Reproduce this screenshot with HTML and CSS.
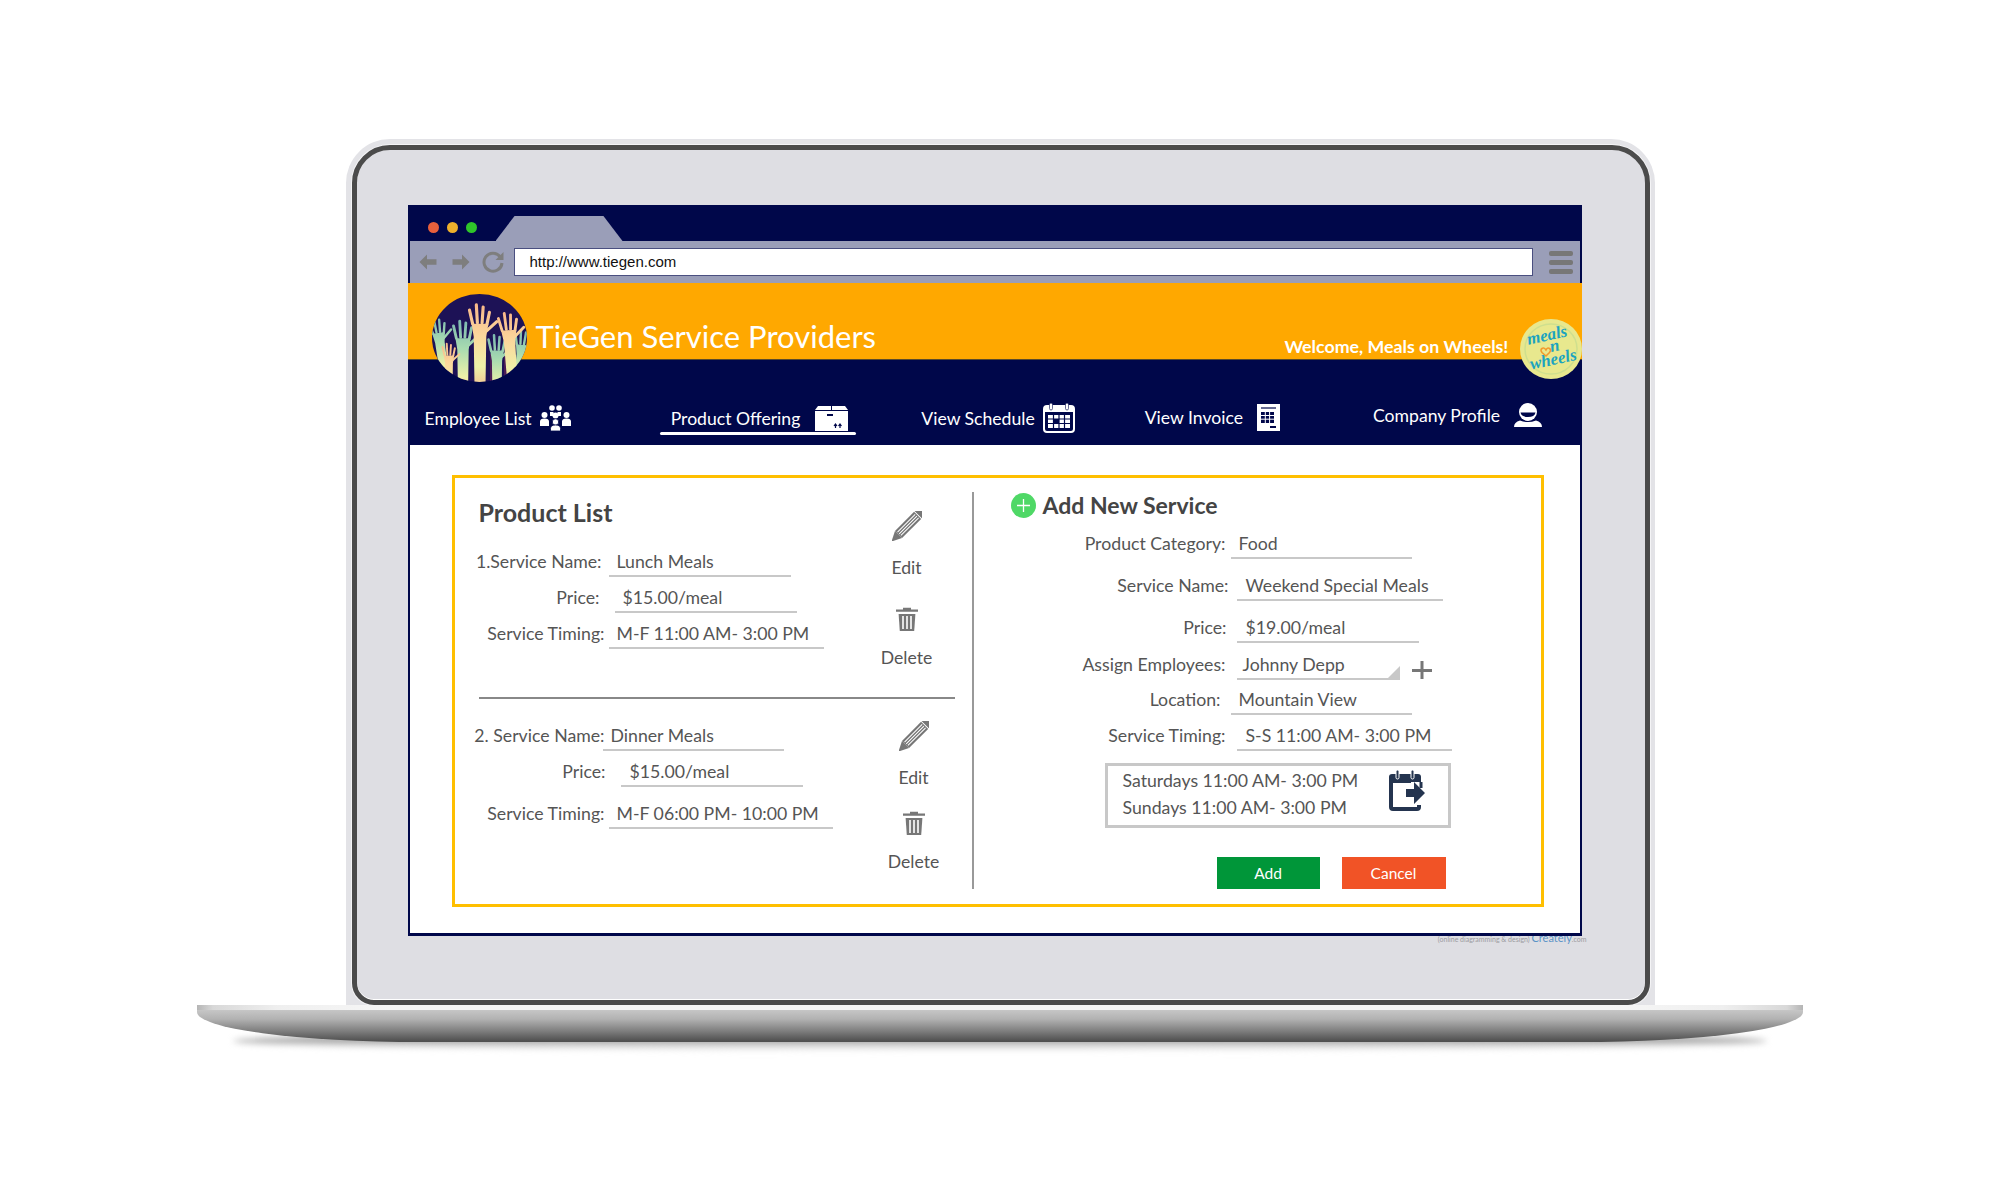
FILE: index.html
```html
<!DOCTYPE html>
<html lang="en">
<head>
    <meta charset="UTF-8">
    <title>TieGen Service Providers</title>
    <link rel="stylesheet" href="styles.css">
</head>
<body>
    <svg class="defs" width="0" height="0">
        <defs>
            <symbol id="pencil" viewBox="0 0 30 30">
                <g transform="rotate(45 15 15)">
                    <path d="M10 -3 a5 4 0 0 1 10 0 v2 h-10z" fill="#777"/>
                    <rect x="10" y="0" width="10" height="27" fill="#777"/>
                    <path d="M12.6 1v25M15 1v25M17.4 1v25" stroke="#fff" stroke-width="1"/>
                    <path d="M10 27h10l-5 10z" fill="#777"/>
                </g>
            </symbol>
            <symbol id="trash" viewBox="0 0 22 24">
                <path d="M7 2.5V0.8h8v1.7h7v2.2H0V2.5z" fill="#777"/>
                <path d="M2.6 7h16.8l-1.2 17H3.8z" fill="#777"/>
                <path d="M7 9v13M11 9v13M15 9v13" stroke="#fff" stroke-width="1.6"/>
            </symbol>
            <linearGradient id="armPeach" gradientUnits="userSpaceOnUse" x1="0" y1="-22" x2="0" y2="62">
                <stop offset="0" stop-color="#f8b98a"/>
                <stop offset=".35" stop-color="#fbd79c"/>
                <stop offset=".7" stop-color="#eef1a8"/>
                <stop offset="1" stop-color="#f4b88c"/>
            </linearGradient>
            <linearGradient id="armMint" gradientUnits="userSpaceOnUse" x1="0" y1="-22" x2="0" y2="62">
                <stop offset="0" stop-color="#7db9b0"/>
                <stop offset=".35" stop-color="#a9dcb0"/>
                <stop offset=".7" stop-color="#eef1a8"/>
                <stop offset="1" stop-color="#f6c592"/>
            </linearGradient>
            <g id="handPeach" fill="url(#armPeach)" stroke="url(#armPeach)" stroke-linecap="round">
                <path d="M-8 -4 L8 -4 L6 8 L5 70 L-5 70 L-6 8z" stroke="none"/>
                <path d="M-7 -4 L-10 -17M-2.5 -5 L-3.5 -22M2 -5 L3 -20M6.5 -3 L9 -15M6 3 L16 -6" stroke-width="3" fill="none"/>
            </g>
            <g id="handMint" fill="url(#armMint)" stroke="url(#armMint)" stroke-linecap="round">
                <path d="M-8 -4 L8 -4 L6 8 L5 70 L-5 70 L-6 8z" stroke="none"/>
                <path d="M-7 -4 L-10 -17M-2.5 -5 L-3.5 -22M2 -5 L3 -20M6.5 -3 L9 -15M6 3 L16 -6" stroke-width="3" fill="none"/>
            </g>
            <clipPath id="logoClip"><ellipse cx="47.5" cy="44" rx="47.5" ry="44"/></clipPath>
        </defs>
    </svg>

    <div class="laptop">
        <div class="lid">
            <div class="bezel">
                <div class="screen">
                    <div class="tabstrip">
                        <span class="dot dot-red"></span>
                        <span class="dot dot-yellow"></span>
                        <span class="dot dot-green"></span>
                        <span class="tab"></span>
                    </div>
                    <div class="toolbar">
                        <svg class="tool-arrow" width="18" height="16" viewBox="0 0 18 16"><path d="M8 0.5L0.5 8 8 15.5V10.8H17.5V5.2H8z" fill="#7e7e7e"/></svg>
                        <svg class="tool-arrow fwd" width="18" height="16" viewBox="0 0 18 16"><path d="M10 0.5L17.5 8 10 15.5V10.8H0.5V5.2H10z" fill="#7e7e7e"/></svg>
                        <svg class="tool-reload" width="22" height="22" viewBox="0 0 22 22"><path d="M18 5.5A9 9 0 1 0 20 12" fill="none" stroke="#7e7e7e" stroke-width="3"/><path d="M21.5 1v8h-8z" fill="#7e7e7e"/></svg>
                        <div class="url">http://www.tiegen.com</div>
                        <div class="burger"><span></span><span></span><span></span></div>
                    </div>
                    <div class="site-head">
                        <svg class="logo" width="95" height="88" viewBox="0 0 95 88">
                            <g clip-path="url(#logoClip)">
                                <rect width="95" height="88" fill="#1d1256"/>
                                <path d="M16 70h5v18h-5zM28 50h6v38h-6zM58 60h6v28h-6zM72 60h6v28h-6z" fill="#4a1c55"/>
                                <use href="#handMint" transform="translate(7 42) rotate(-8) scale(.8)"/>
                                <use href="#handMint" transform="translate(90 54) rotate(6) scale(.8)"/>
                                <use href="#handMint" transform="translate(31 48) scale(.95)"/>
                                <use href="#handMint" transform="translate(65 60) scale(.85)"/>
                                <use href="#handPeach" transform="translate(17 64) scale(.65)"/>
                                <use href="#handPeach" transform="translate(48 34) scale(1.05)"/>
                                <use href="#handPeach" transform="translate(77 40) rotate(-4) scale(.95)"/>
                            </g>
                        </svg>
                        <div class="orange-bar">
                            <h1 class="site-title">TieGen Service Providers</h1>
                            <div class="welcome">Welcome, Meals on Wheels!</div>
                        </div>
                        <nav class="nav">
                            <a class="nav-item item-employee">Employee List
                                <svg width="31" height="26" viewBox="0 0 31 26" fill="#fff">
                                    <circle cx="12" cy="3" r="2.8"/><circle cx="19" cy="3" r="2.8"/>
                                    <circle cx="4.5" cy="10" r="3"/><circle cx="26.5" cy="10" r="3"/><circle cx="15.5" cy="10.5" r="3"/>
                                    <path d="M10 7h3.5v4h-3.500zM17.500 7H21v4h-3.500z"/>
                                    <path d="M0 21v-4.500q0-3 4.500-3t4.500 3V21zM22 21v-4.500q0-3 4.500-3t4.500 3V21z"/>
                                    <circle cx="15.500" cy="17" r="3.200" stroke="#00074a" stroke-width=".8"/>
                                    <path d="M10.500 26v-2.500q0-3.500 5-3.500t5 3.500V26z" stroke="#00074a" stroke-width=".8"/>
                                </svg>
                            </a>
                            <a class="nav-item item-product active">Product Offering
                                <svg width="33" height="25" viewBox="0 0 33 25">
                                    <path d="M3 0h27l3 4v21H0V4z" fill="#fff"/>
                                    <path d="M0 4.500h33M16.500 0v4" stroke="#00074a" stroke-width="1"/>
                                    <path d="M12 9h6" stroke="#00074a" stroke-width="2"/>
                                    <path d="M20.500 18v4M25 18v4M19 20l1.500-2 1.500 2M23.500 20l1.500-2 1.500 2" stroke="#00074a" stroke-width="1.200" fill="none"/>
                                </svg>
                            </a>
                            <a class="nav-item item-schedule">View Schedule
                                <svg width="32" height="30" viewBox="0 0 32 30">
                                    <rect x="1" y="3" width="30" height="26" rx="3" fill="#00074a" stroke="#fff" stroke-width="2"/>
                                    <path d="M1 4h30v5H1z" fill="#fff"/>
                                    <rect x="6.500" y="0" width="3" height="7" rx="1.500" fill="#fff" stroke="#00074a" stroke-width=".6"/>
                                    <rect x="22.500" y="0" width="3" height="7" rx="1.500" fill="#fff" stroke="#00074a" stroke-width=".6"/>
                                    <path d="M5 12h22v13H5z" fill="#fff"/>
                                    <path d="M5 16h22M5 20.500h22M10.500 12v13M16 12v13M21.500 12v13" stroke="#00074a" stroke-width="1.200"/>
                                    <rect x="10.500" y="16" width="5.500" height="4.500" fill="#00074a"/>
                                </svg>
                            </a>
                            <a class="nav-item item-invoice">View Invoice
                                <svg width="23" height="27" viewBox="0 0 23 27">
                                    <rect width="23" height="27" fill="#fff"/>
                                    <path d="M4 4h15" stroke="#00074a" stroke-width="1.200"/>
                                    <path d="M4 8h13v11H4z" fill="#00074a"/>
                                    <path d="M4 11.500h13M4 15.200h13M8.300 8v11M12.600 8v11" stroke="#fff" stroke-width="1"/>
                                    <path d="M13 23h6" stroke="#00074a" stroke-width="2"/>
                                </svg>
                            </a>
                            <a class="nav-item item-profile">Company Profile
                                <svg width="28" height="24" viewBox="0 0 28 24" fill="#fff">
                                    <circle cx="14" cy="9" r="9"/>
                                    <path d="M6.500 9.500h15q-1 4.500-7.500 4.500t-7.500-4.500z" fill="#00074a"/>
                                    <path d="M0 24q0-5 6-6.500 8 3 16 0 6 1.500 6 6.500z"/>
                                </svg>
                            </a>
                        </nav>
                        <svg class="meals" width="62" height="60" viewBox="0 0 62 60">
                            <ellipse cx="31" cy="30" rx="31" ry="30" fill="#e8e88e"/>
                            <ellipse cx="31" cy="30" rx="26" ry="25" fill="none" stroke="#cfdf8e" stroke-width="1.500"/>
                            <g class="meals-text" transform="rotate(-12 31 30)">
                                <text x="30" y="21" text-anchor="middle">meals</text>
                                <text x="35" y="33" text-anchor="middle">n</text>
                                <text x="31" y="46" text-anchor="middle">wheels</text>
                            </g>
                            <path d="M26 31q-2-3-4-1.500t0 4l4 3.500 3.500-3.500q2-2.500 0-4t-3.500 1.500z" fill="none" stroke="#f29a2e" stroke-width="1.600"/>
                        </svg>
                    </div>
                    <div class="page">
                        <div class="frame">
                            <section class="products">
                                <div class="product lunch">
                                    <div class="fields">
                                        <h2 class="list-title">Product List</h2>
                                        <div class="row r-lunch-name"><span class="label">1.Service Name:</span><span class="value">Lunch Meals</span></div>
                                        <div class="row r-lunch-price"><span class="label">Price:</span><span class="value">$15.00/meal</span></div>
                                        <div class="row r-lunch-time"><span class="label">Service Timing:</span><span class="value">M-F 11:00 AM- 3:00 PM</span></div>
                                    </div>
                                    <div class="actions">
                                        <svg class="act-pencil" width="30" height="30"><use href="#pencil"/></svg>
                                        <div class="act-edit">Edit</div>
                                        <svg class="act-trash" width="22" height="24"><use href="#trash"/></svg>
                                        <div class="act-delete">Delete</div>
                                    </div>
                                </div>
                                <hr class="split">
                                <div class="product dinner">
                                    <div class="fields">
                                        <div class="row r-dinner-name"><span class="label">2. Service Name:</span><span class="value">Dinner Meals</span></div>
                                        <div class="row r-dinner-price"><span class="label">Price:</span><span class="value">$15.00/meal</span></div>
                                        <div class="row r-dinner-time"><span class="label">Service Timing:</span><span class="value">M-F 06:00 PM- 10:00 PM</span></div>
                                    </div>
                                    <div class="actions">
                                        <svg class="act-pencil" width="30" height="30"><use href="#pencil"/></svg>
                                        <div class="act-edit">Edit</div>
                                        <svg class="act-trash" width="22" height="24"><use href="#trash"/></svg>
                                        <div class="act-delete">Delete</div>
                                    </div>
                                </div>
                            </section>
                            <section class="add-service">
                                <h2 class="add-title">
                                    <svg width="25" height="25" viewBox="0 0 25 25"><circle cx="12.500" cy="12.500" r="12.500" fill="#4fd866"/><path d="M12.500 6v13M6 12.500h13" stroke="#fff" stroke-width="1.300"/></svg>
                                    Add New Service
                                </h2>
                                <div class="row r-cat"><span class="label">Product Category:</span><span class="value">Food</span></div>
                                <div class="row r-name"><span class="label">Service Name:</span><span class="value">Weekend Special Meals</span></div>
                                <div class="row r-price"><span class="label">Price:</span><span class="value">$19.00/meal</span></div>
                                <div class="row r-assign">
                                    <span class="label">Assign Employees:</span><span class="value select">Johnny Depp</span>
                                    <svg class="add-emp" width="20" height="18" viewBox="0 0 20 18"><path d="M10 0v18M0 9.500h20" stroke="#777" stroke-width="3"/></svg>
                                </div>
                                <div class="row r-loc"><span class="label">Location:</span><span class="value">Mountain View</span></div>
                                <div class="row r-time"><span class="label">Service Timing:</span><span class="value">S-S 11:00 AM- 3:00 PM</span></div>
                                <div class="times">
                                    <div class="times-text">Saturdays 11:00 AM- 3:00 PM<br>Sundays 11:00 AM- 3:00 PM</div>
                                    <svg class="times-icon" width="38" height="41" viewBox="0 0 38 41">
                                        <path d="M24 11H4v26q0 2 2 2h24q2 0 2-2v-2" fill="none" stroke="#24344f" stroke-width="4"/>
                                        <path d="M2 12V7q0-3 3-3h26q3 0 3 3v5z" fill="#24344f"/>
                                        <path d="M34 12v6" stroke="#24344f" stroke-width="3"/>
                                        <rect x="9" y="0" width="3" height="9" rx="1.500" fill="#24344f" stroke="#fff"/>
                                        <rect x="24" y="0" width="3" height="9" rx="1.500" fill="#24344f" stroke="#fff"/>
                                        <path d="M19 19h8v-7l11 11-11 11v-7h-8z" fill="#24344f"/>
                                    </svg>
                                </div>
                                <div class="buttons">
                                    <button class="btn btn-add">Add</button>
                                    <button class="btn btn-cancel">Cancel</button>
                                </div>
                            </section>
                        </div>
                    </div>
                </div>
                <div class="watermark">(online diagramming &amp; design) <span class="wm-brand">Creately</span>.com</div>
            </div>
        </div>
        <div class="base"></div>
    </div>
</body>
</html>
```

FILE: styles.css
```css
* { box-sizing: border-box; }
body { margin: 0; background: #fff; font-family: Lato, "Open Sans", sans-serif; color: #555; }
.defs { position: absolute; }

/* laptop */
.laptop { display: flex; flex-direction: column; align-items: center; padding-top: 139px; height: 1200px; overflow: hidden; }
.lid { width: 1309px; height: 866px; padding: 6px 5px 0 6px; background: #e3e3e7; border-radius: 44px 44px 0 0; }
.bezel { height: 100%; padding: 55px 63px 0 51px; background: #dedee3; border: 5px solid #4b4b4b; border-radius: 38px 38px 22px 22px; box-shadow: inset 0 -1px 0 #fff, 0 0 0 1px #f4f4f6; }
.base { position: relative; width: 1606px; height: 37px; border-radius: 0 0 224px 224px / 0 0 30px 30px;
    background:
        linear-gradient(90deg, #b5b5b5 0, #d8d8d8 1%, #efefef 5%, #f6f6f6 12%, #f6f6f6 88%, #efefef 95%, #d8d8d8 99%, #b5b5b5 100%) 0 0 / 100% 5px no-repeat,
        linear-gradient(#c6c6c6 5px, #b2b2b2 14px, #7e7e7e 26px, #505050 36px); }
.base::after { content: ""; position: absolute; z-index: -1; left: 36px; right: 36px; top: 26px; height: 20px; background: linear-gradient(#555, #bbb 55%, #fff); filter: blur(3px); border-radius: 50%; }
.watermark { position: relative; margin: -4px -5px 0 0; font-size: 7px; line-height: 12px; text-align: right; color: #9b9ba1; }
.wm-brand { font-size: 11px; color: #5b93c7; }

/* browser */
.screen { position: relative; z-index: 1; width: 1174px; height: 731px; display: flex; flex-direction: column; }
.tabstrip { height: 36px; flex: none; background: #00074a; display: flex; align-items: flex-end; padding-left: 20px; }
.dot { width: 11px; height: 11px; border-radius: 50%; margin: 0 8px 8px 0; }
.dot-red { background: #e8603c; }
.dot-yellow { background: #eeb02c; }
.dot-green { background: #2fc52a; }
.tab { width: 127px; height: 25px; margin-left: 11px; background: #9a9eb8; clip-path: polygon(15% 0, 85% 0, 100% 100%, 0 100%); }
.toolbar { height: 42px; flex: none; display: flex; align-items: center; background: #9a9eb8; border-left: 2px solid #00074a; border-right: 2px solid #00074a; padding-left: 9px; }
.tool-arrow { flex: none; }
.tool-arrow.fwd { margin-left: 15px; }
.tool-reload { flex: none; margin-left: 12px; }
.url { width: 1019px; height: 28px; margin-left: 10px; padding-left: 15px; background: #fff; border: 1px solid #4a4f80; font: 15px/26px "Liberation Sans", Arial, sans-serif; color: #111; }
.burger { margin-left: 16px; display: flex; flex-direction: column; gap: 4px; }
.burger span { display: block; width: 24px; height: 5px; border-radius: 2px; background: #777; }

/* site header */
.site-head { position: relative; flex: none; }
.logo { position: absolute; left: 24px; top: 11px; z-index: 1; }
.meals { position: absolute; right: 0; top: 36px; }
.meals-text { font: italic bold 17px "Liberation Serif", serif; fill: #1ba3c0; }
.orange-bar { height: 77px; background: #ffa800; display: flex; padding-left: 128px; border-bottom: 1px solid #5a4a2a; }
.site-title { width: 344px; margin: 35px 0 0; font-size: 31px; line-height: 36px; font-weight: 400; color: #fff; white-space: nowrap; }
.welcome { margin: 51px 0 0 405px; font-size: 17.8px; line-height: 24px; font-weight: 700; color: #fff; white-space: nowrap; }
.nav { height: 85px; background: #00074a; display: flex; align-items: flex-start; padding: 43px 0 0 17px; color: #fff; font-size: 17.6px; }
.nav-item { display: flex; align-items: center; gap: 8px; height: 30px; white-space: nowrap; }
.item-product { margin-left: 89px; padding: 0 8px 0 11px; gap: 15px; }
.item-product.active { position: relative; }
.item-product.active::after { content: ""; position: absolute; left: 0; right: 0; top: 29px; height: 3px; background: #fff; border-radius: 2px; }
.item-schedule { margin-left: 65px; }
.item-invoice { margin-left: 70px; margin-top: -1px; gap: 14px; }
.item-profile { margin-left: 93px; margin-top: -3px; gap: 14px; }

/* page body */
.page { flex: 1; background: #fff; border: 2px solid #00074a; border-top: 0; border-bottom-width: 3px; padding: 30px 34px 0 42px; }
.frame { width: 1092px; height: 432px; border: 3px solid #ffbf00; display: flex; padding-top: 14px; }
.products { width: 517px; flex: none; }
.add-service { height: 397px; border-left: 2px solid #999; flex: 1; }
.list-title { margin: 5px 0 24px 24px; font-size: 25px; line-height: 30px; font-weight: 700; color: #444; }
.product { display: flex; }
.lunch .fields { width: 412px; }
.dinner .fields { width: 419px; padding-top: 4px; }
.actions { width: 80px; font-size: 17.6px; line-height: 24px; text-align: center; display: flex; flex-direction: column; align-items: center; }
.lunch .act-pencil { margin-top: 19px; }
.act-edit { margin-top: 15px; }
.act-trash { margin-top: 27px; }
.act-delete { margin-top: 15px; }
.dinner .act-edit { margin-top: 15px; }
.dinner .act-trash { margin-top: 21px; }
.split { height: 2px; margin: 27px 17px 22px 24px; border: 0; background: #888; }

/* form rows: label width, gap and underline length differ from row to row */
.row { display: flex; height: 26px; line-height: 22px; font-size: 17.7px; white-space: nowrap; margin-top: var(--t, 10px); }
.row .label { width: var(--l); text-align: right; }
.row .value { width: var(--w); margin-left: var(--g); padding-left: var(--p, 8px); border-bottom: 2px solid #c8c8c8; position: relative; }
.r-lunch-name { --t: 0; --l: 147px; --g: 7px; --w: 182px; }
.r-lunch-price { --l: 145px; --g: 15px; --w: 182px; }
.r-lunch-time { --l: 150px; --g: 4px; --w: 215px; }
.r-dinner-name { --t: 0; --l: 150px; --g: -2px; --w: 181px; }
.r-dinner-price { --l: 151px; --g: 15px; --w: 182px; --p: 9px; }
.r-dinner-time { --t: 16px; --l: 150px; --g: 4px; --w: 224px; }
.add-title { margin: -1px 0 14px 37px; display: flex; align-items: center; gap: 7px; font-size: 23px; line-height: 28px; font-weight: 700; color: #444; }
.add-service .row { margin-left: 2px; }
.r-cat { --t: 0; --l: 250px; --g: 5px; --w: 181px; }
.r-name { --t: 16px; --l: 253px; --g: 8px; --w: 206px; --p: 9px; }
.r-price { --t: 16px; --l: 251px; --g: 10px; --w: 182px; --p: 9px; }
.r-assign { --t: 11px; --l: 250px; --g: 11px; --w: 163px; --p: 6px; }
.r-loc { --t: 9px; --l: 245px; --g: 10px; --w: 181px; }
.r-time { --l: 250px; --g: 11px; --w: 215px; --p: 9px; }
.select::after { content: ""; position: absolute; right: 0; bottom: 0; border: 6px solid #c8c8c8; border-top-color: transparent; border-left-color: transparent; }
.add-emp { margin: 7px 0 0 12px; }
.times { width: 346px; height: 65px; margin: 12px 0 0 131px; border: 3px solid #c8c8c8; display: flex; padding: 1px 0 0 15px; font-size: 17.7px; line-height: 27px; white-space: nowrap; }
.times-text { width: 264px; }
.times-icon { margin-top: 3px; }
.buttons { display: flex; gap: 22px; margin: 29px 0 0 243px; }
.btn { width: 103px; height: 32px; border: 0; padding: 0; font-family: inherit; font-size: 15.5px; color: #fff; }
.btn-add { background: #009639; }
.btn-cancel { background: #f15326; width: 104px; }
```
